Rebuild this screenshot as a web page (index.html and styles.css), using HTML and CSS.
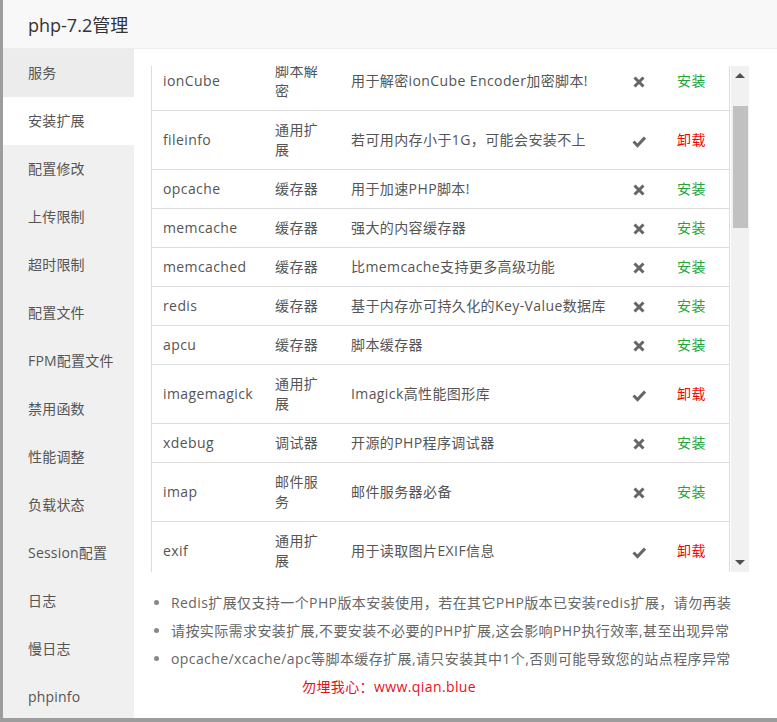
FILE: index.html
```html
<!doctype html>
<html>
    <head>
        <meta charset="UTF-8" />
        <title>php-7.2管理</title>
        <link rel="stylesheet" href="styles.css">
    </head>
    <body>
        <div class="dialog">
            <div class="dialog-title">php-7.2管理</div>

            <div class="dialog-body">
                <!-- Left menu -->
                <ul class="side-menu">
                    <li class="hover">服务</li>
                    <li class="active">安装扩展</li>
                    <li>配置修改</li>
                    <li>上传限制</li>
                    <li>超时限制</li>
                    <li>配置文件</li>
                    <li>FPM配置文件</li>
                    <li>禁用函数</li>
                    <li>性能调整</li>
                    <li>负载状态</li>
                    <li>Session配置</li>
                    <li>日志</li>
                    <li>慢日志</li>
                    <li>phpinfo</li>
                </ul>

                <div class="main">
                    <!-- Extension list -->
                    <div class="table-box">
                        <div class="table-clip">
                            <table class="ext-table">
                                <colgroup>
                                    <col style="width: 113px">
                                    <col style="width: 76px">
                                    <col style="width: 270px">
                                    <col style="width: 56px">
                                    <col>
                                </colgroup>
                                <tbody>
                                    <tr>
                                        <td>ionCube</td>
                                        <td class="type">脚本解密</td>
                                        <td>用于解密ionCube Encoder加密脚本!</td>
                                        <td class="state"><svg class="icon" viewBox="0 0 14 14"><path d="M2.5 2.5L11.5 11.5M11.5 2.5L2.5 11.5"/></svg></td>
                                        <td><a class="btn-install">安装</a></td>
                                    </tr>
                                    <tr>
                                        <td>fileinfo</td>
                                        <td class="type">通用扩展</td>
                                        <td>若可用内存小于1G，可能会安装不上</td>
                                        <td class="state"><svg class="icon" viewBox="0 0 14 14"><path d="M1.5 7.5L5.5 11.5L13 3.5"/></svg></td>
                                        <td><a class="btn-remove">卸载</a></td>
                                    </tr>
                                    <tr>
                                        <td>opcache</td>
                                        <td class="type">缓存器</td>
                                        <td>用于加速PHP脚本!</td>
                                        <td class="state"><svg class="icon" viewBox="0 0 14 14"><path d="M2.5 2.5L11.5 11.5M11.5 2.5L2.5 11.5"/></svg></td>
                                        <td><a class="btn-install">安装</a></td>
                                    </tr>
                                    <tr>
                                        <td>memcache</td>
                                        <td class="type">缓存器</td>
                                        <td>强大的内容缓存器</td>
                                        <td class="state"><svg class="icon" viewBox="0 0 14 14"><path d="M2.5 2.5L11.5 11.5M11.5 2.5L2.5 11.5"/></svg></td>
                                        <td><a class="btn-install">安装</a></td>
                                    </tr>
                                    <tr>
                                        <td>memcached</td>
                                        <td class="type">缓存器</td>
                                        <td>比memcache支持更多高级功能</td>
                                        <td class="state"><svg class="icon" viewBox="0 0 14 14"><path d="M2.5 2.5L11.5 11.5M11.5 2.5L2.5 11.5"/></svg></td>
                                        <td><a class="btn-install">安装</a></td>
                                    </tr>
                                    <tr>
                                        <td>redis</td>
                                        <td class="type">缓存器</td>
                                        <td>基于内存亦可持久化的Key-Value数据库</td>
                                        <td class="state"><svg class="icon" viewBox="0 0 14 14"><path d="M2.5 2.5L11.5 11.5M11.5 2.5L2.5 11.5"/></svg></td>
                                        <td><a class="btn-install">安装</a></td>
                                    </tr>
                                    <tr>
                                        <td>apcu</td>
                                        <td class="type">缓存器</td>
                                        <td>脚本缓存器</td>
                                        <td class="state"><svg class="icon" viewBox="0 0 14 14"><path d="M2.5 2.5L11.5 11.5M11.5 2.5L2.5 11.5"/></svg></td>
                                        <td><a class="btn-install">安装</a></td>
                                    </tr>
                                    <tr>
                                        <td>imagemagick</td>
                                        <td class="type">通用扩展</td>
                                        <td>Imagick高性能图形库</td>
                                        <td class="state"><svg class="icon" viewBox="0 0 14 14"><path d="M1.5 7.5L5.5 11.5L13 3.5"/></svg></td>
                                        <td><a class="btn-remove">卸载</a></td>
                                    </tr>
                                    <tr>
                                        <td>xdebug</td>
                                        <td class="type">调试器</td>
                                        <td>开源的PHP程序调试器</td>
                                        <td class="state"><svg class="icon" viewBox="0 0 14 14"><path d="M2.5 2.5L11.5 11.5M11.5 2.5L2.5 11.5"/></svg></td>
                                        <td><a class="btn-install">安装</a></td>
                                    </tr>
                                    <tr>
                                        <td>imap</td>
                                        <td class="type">邮件服务</td>
                                        <td>邮件服务器必备</td>
                                        <td class="state"><svg class="icon" viewBox="0 0 14 14"><path d="M2.5 2.5L11.5 11.5M11.5 2.5L2.5 11.5"/></svg></td>
                                        <td><a class="btn-install">安装</a></td>
                                    </tr>
                                    <tr>
                                        <td>exif</td>
                                        <td class="type">通用扩展</td>
                                        <td>用于读取图片EXIF信息</td>
                                        <td class="state"><svg class="icon" viewBox="0 0 14 14"><path d="M1.5 7.5L5.5 11.5L13 3.5"/></svg></td>
                                        <td><a class="btn-remove">卸载</a></td>
                                    </tr>
                                    <tr>
                                        <td>intl</td>
                                        <td class="type">通用扩展</td>
                                        <td>提供国际化支持</td>
                                        <td class="state"><svg class="icon" viewBox="0 0 14 14"><path d="M2.5 2.5L11.5 11.5M11.5 2.5L2.5 11.5"/></svg></td>
                                        <td><a class="btn-install">安装</a></td>
                                    </tr>
                                </tbody>
                            </table>
                        </div>

                        <!-- Scrollbar -->
                        <div class="scrollbar">
                            <div class="sb-btn"><span class="arrow-up"></span></div>
                            <div class="sb-track"><div class="sb-thumb"></div></div>
                            <div class="sb-btn"><span class="arrow-down"></span></div>
                        </div>
                    </div>

                    <ul class="tips">
                        <li>Redis扩展仅支持一个PHP版本安装使用，若在其它PHP版本已安装redis扩展，请勿再装</li>
                        <li>请按实际需求安装扩展,不要安装不必要的PHP扩展,这会影响PHP执行效率,甚至出现异常</li>
                        <li>opcache/xcache/apc等脚本缓存扩展,请只安装其中1个,否则可能导致您的站点程序异常</li>
                    </ul>
                    <div class="credit">勿埋我心：www.qian.blue</div>
                </div>
            </div>
        </div>
    </body>
</html>
```

FILE: styles.css
```css
body {
    font-family: "Open Sans", "Noto Sans CJK SC", sans-serif;
    margin: 0;
    padding: 0;
    background-color: #9d9d9d;
    color: #555;
    font-size: 14px;
    letter-spacing: 0.4px;
    overflow: hidden;
}

.dialog {
    margin-left: 3px;
    width: 774px;
    height: 718px;
    background-color: #fff;
    display: flex;
    flex-direction: column;
}

.dialog-title {
    height: 48px;
    line-height: 50px;
    padding-left: 25px;
    font-size: 18px;
    letter-spacing: 0;
    color: #333;
    background-color: #f8f8f8;
    border-bottom: 1px solid #eee;
}

.dialog-body {
    flex: 1;
    display: flex;
    min-height: 0;
}

/* Left menu */
.side-menu {
    list-style: none;
    margin: 0;
    padding: 0;
    width: 132px;
    background-color: #f0f0f0;
}

.side-menu li {
    height: 48px;
    line-height: 48px;
    padding-left: 25px;
    color: #555;
    letter-spacing: 0.2px;
}

.side-menu li.hover {
    background-color: #ececec;
}

.side-menu li.active {
    background-color: #fff;
}

.main {
    flex: 1;
    padding: 17px 28px 0 17px;
}

/* Table with its scrollbar */
.table-box {
    display: flex;
    height: 506px;
}

.table-clip {
    width: 577px;
    overflow: hidden;
    border-left: 1px solid #ddd;
    border-right: 1px solid #ddd;
}

.ext-table {
    width: 100%;
    table-layout: fixed;
    border-collapse: collapse;
    margin-top: -14px;
}

.ext-table td {
    padding: 9px 10px;
    line-height: 20px;
    border-bottom: 1px solid #ddd;
    vertical-align: middle;
    white-space: nowrap;
}

.ext-table td:first-child {
    padding-left: 11px;
}

.ext-table td.type {
    padding-right: 14px;
    white-space: normal;
}

.ext-table td.state {
    text-align: center;
    padding: 9px 0;
}

.icon {
    width: 14px;
    height: 14px;
    display: inline-block;
    vertical-align: middle;
    fill: none;
    stroke: #666;
    stroke-width: 3;
}

.btn-install {
    color: #20a53a;
}

.btn-remove {
    color: #ef0808;
}

.scrollbar {
    width: 18px;
    margin-left: 1px;
    background-color: #f1f1f1;
    display: flex;
    flex-direction: column;
}

.sb-btn {
    height: 19px;
    display: flex;
    align-items: center;
    justify-content: center;
}

.arrow-up {
    width: 0;
    height: 0;
    border-left: 5px solid transparent;
    border-right: 5px solid transparent;
    border-bottom: 5px solid #505050;
}

.arrow-down {
    width: 0;
    height: 0;
    border-left: 5px solid transparent;
    border-right: 5px solid transparent;
    border-top: 5px solid #505050;
}

.sb-track {
    flex: 1;
}

.sb-thumb {
    margin: 21px 1px 0 2px;
    height: 122px;
    background-color: #c1c1c1;
}

/* Notes */
.tips {
    margin: 17px 0 0;
    padding-left: 20px;
    color: #666;
    line-height: 28px;
    white-space: nowrap;
}

.tips li::marker {
    color: #888;
}

.credit {
    padding-left: 151px;
    line-height: 28px;
    color: #e8101a;
}
```
